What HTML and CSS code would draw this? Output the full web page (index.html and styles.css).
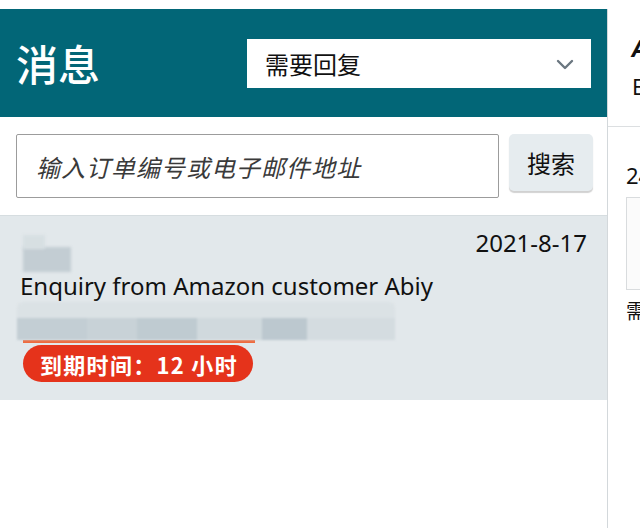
FILE: index.html
```html
<!DOCTYPE html>
<html lang="zh">
<head>
<meta charset="utf-8">
<title>消息</title>
<link rel="stylesheet" href="styles.css">
</head>
<body>
<div class="page">
  <div class="left">
    <header class="header">
      <h1 class="title">消息</h1>
      <div class="select">
        <span class="select-text">需要回复</span>
        <svg class="chevron" width="18" height="11" viewBox="0 0 18 11"><path d="M2 2 L9 9 L16 2" fill="none" stroke="#6b7780" stroke-width="2.4" stroke-linecap="round" stroke-linejoin="round"/></svg>
      </div>
    </header>
    <div class="search">
      <div class="input"><span class="placeholder">输入订单编号或电子邮件地址</span></div>
      <button class="btn">搜索</button>
    </div>
    <div class="row">
      <div class="redact redact-name"></div>
      <div class="redact redact-stem"></div>
      <div class="line-top">
        <span class="date">2021-8-17</span>
      </div>
      <div class="subject">Enquiry from Amazon customer Abiy</div>
      <div class="redact-bar">
        <span class="seg s1"></span><span class="seg s2"></span><span class="seg s3"></span><span class="seg s4"></span><span class="seg s5"></span><span class="seg s6"></span>
      </div>
      <div class="orange-line"></div>
      <div class="badge">到期时间：12 小时</div>
    </div>
  </div>
  <aside class="right">
    <div class="right-head">
      <div class="rh-a">A</div>
      <div class="rh-e">E</div>
    </div>
    <div class="right-body">
      <div class="rb-num">24</div>
      <div class="rb-box"></div>
      <div class="rb-cjk">需</div>
    </div>
  </aside>
</div>
</body>
</html>
```

FILE: styles.css
```css
* { box-sizing: border-box; }
html, body { margin: 0; padding: 0; background: #ffffff; }
body {
  width: 640px;
  height: 528px;
  overflow: hidden;
  padding-top: 9px;
  font-family: "Noto Sans", "Noto Sans CJK SC", sans-serif;
  color: #111;
}
.page {
  display: flex;
  height: 519px;
}
.left {
  width: 608px;
  flex: none;
  border-right: 1px solid #d3d8db;
  display: flex;
  flex-direction: column;
}
.header {
  height: 108px;
  background: #026677;
  display: flex;
  align-items: center;
  justify-content: space-between;
  padding: 0 16px 0 16px;
}
.title {
  margin: 0;
  font-family: "Noto Sans CJK SC", sans-serif;
  font-weight: 500;
  font-size: 42px;
  line-height: 48px;
  color: #ffffff;
}
.select {
  width: 344px;
  height: 49px;
  background: #ffffff;
  display: flex;
  align-items: center;
  justify-content: space-between;
  padding: 0 17px 0 18px;
  margin-top: 1px;
}
.select-text {
  font-family: "Noto Sans CJK SC", sans-serif;
  font-size: 24px;
  line-height: 30px;
  color: #111;
}
.chevron { display: block; margin-top: 2px; }
.search {
  display: flex;
  align-items: flex-start;
  gap: 10px;
  padding: 17px 14px 17px 16px;
}
.input {
  width: 483px;
  height: 64px;
  border: 1.5px solid #9c9c9c;
  border-radius: 2px;
  background: #fff;
  display: flex;
  align-items: center;
  padding-left: 19px;
}
.placeholder {
  font-family: "Noto Sans CJK SC", sans-serif;
  font-style: italic;
  font-size: 24px;
  color: #3a3a3a;
  letter-spacing: 1px;
}
.btn {
  width: 84px;
  height: 57px;
  border: none;
  border-radius: 5px;
  background: #e6ecef;
  box-shadow: 0 2px 1px rgba(0,0,0,0.18);
  font-family: "Noto Sans CJK SC", sans-serif;
  font-size: 24px;
  color: #111;
  padding: 0;
  margin: 0;
}
.row {
  position: relative;
  background: #e2e8eb;
  border-top: 1px solid #d6dde0;
  padding: 11px 20px 18px 20px;
}
.line-top {
  display: flex;
  justify-content: flex-end;
  height: 32px;
}
.date {
  font-size: 24px;
  line-height: 32px;
  color: #111;
}
.subject {
  margin-top: 11px;
  font-size: 24px;
  line-height: 32px;
  color: #111;
  white-space: nowrap;
}
.redact {
  position: absolute;
  filter: blur(1.5px);
}
.redact-name {
  left: 23px;
  top: 31px;
  width: 48px;
  height: 25px;
  background: #c3cdd3;
}
.redact-stem {
  left: 23px;
  top: 19px;
  width: 22px;
  height: 14px;
  background: #d7dfe2;
}
.redact-bar {
  display: flex;
  align-items: flex-end;
  width: 378px;
  height: 38px;
  margin-left: -3px;
  background: linear-gradient(#dbe2e5 0, #dbe2e5 45%, #cdd6db 45%);
  border-radius: 6px 6px 0 0;
  filter: blur(1.2px);
}
.seg { display: block; height: 22px; }
.s1 { width: 70px; background: #c3ced4; }
.s2 { width: 50px; background: #c8d2d7; }
.s3 { width: 60px; background: #bfcbd1; }
.s4 { width: 65px; background: #d0d9dd; }
.s5 { width: 45px; background: #bcc8cf; }
.s6 { width: 88px; background: #d4dce0; }
.orange-line {
  width: 232px;
  height: 3px;
  margin: 0 0 2px 3px;
  background: #ee6a3e;
}
.badge {
  display: inline-flex;
  align-items: center;
  height: 37px;
  margin-left: 3px;
  padding: 0 15px 0 17px;
  border-radius: 19px;
  background: #e5331b;
  color: #ffffff;
  font-family: "Noto Sans CJK SC", sans-serif;
  font-weight: 700;
  font-size: 22px;
  letter-spacing: 1.3px;
  white-space: nowrap;
}
.right {
  flex: 1;
  overflow: hidden;
  white-space: nowrap;
}
.right-head {
  height: 118px;
  border-bottom: 1px solid #dcdfe1;
  padding: 24px 0 0 24px;
}
.rh-a {
  font-size: 24px;
  font-weight: 700;
  font-style: italic;
  line-height: 30px;
}
.rh-e {
  font-size: 22px;
  line-height: 30px;
  margin-top: 8px;
}
.right-body {
  padding: 33px 0 0 18px;
}
.rb-num {
  font-size: 22px;
  line-height: 30px;
}
.rb-box {
  width: 60px;
  height: 93px;
  margin-top: 7px;
  border: 1px solid #d9dcde;
  background: #fbfbfb;
}
.rb-cjk {
  font-family: "Noto Sans CJK SC", sans-serif;
  font-size: 20px;
  line-height: 28px;
  margin-top: 7px;
}
```
